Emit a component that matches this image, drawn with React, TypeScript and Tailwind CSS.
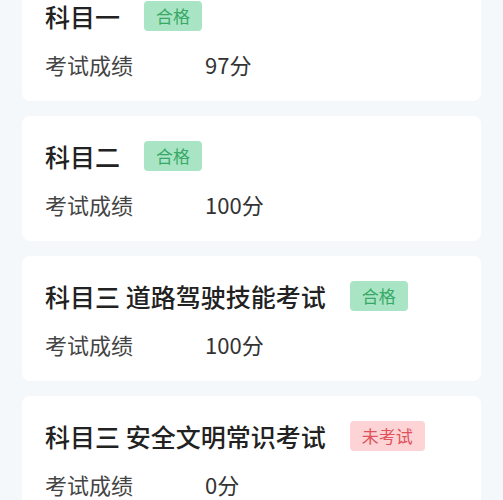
import * as React from "react"

type Status = "pass" | "absent"

interface Subject {
  title: string;
  status: Status;
  score: number;
}

const subjects: Subject[] = [
  { title: "科目一", status: "pass", score: 97 },
  { title: "科目二", status: "pass", score: 100 },
  { title: "科目三 道路驾驶技能考试", status: "pass", score: 100 },
  { title: "科目三 安全文明常识考试", status: "absent", score: 0 },
]

function StatusTag({ status }: { status: Status }) {
  if (status === "pass") {
    return (
      <span className="ml-[24px] inline-flex h-[30px] items-center rounded-[4px] bg-[#a9e5c4] px-[12px] text-[17px] text-[#37a866]">
        合格
      </span>
    )
  }
  return (
    <span className="ml-[24px] inline-flex h-[30px] items-center rounded-[4px] bg-[#fdd3d5] px-[12px] text-[17px] text-[#de525b]">
      未考试
    </span>
  )
}

function SubjectCard({ subject }: { subject: Subject }) {
  return (
    <div className="rounded-[8px] bg-white px-[23px] pt-[25px] pb-[22px]">
      <div className="flex h-[30px] items-center">
        <span className="text-[25px] leading-[30px] font-medium text-[#222]">{subject.title}</span>
        <StatusTag status={subject.status} />
      </div>
      <div className="mt-[18px] flex h-[30px] items-center text-[22px] leading-[30px]">
        <span className="w-[160px] shrink-0 text-[#444]">考试成绩</span>
        <span className="text-[#333]">{subject.score}分</span>
      </div>
    </div>
  )
}

export default function App() {
  return (
    <div
      className="h-[500px] overflow-hidden bg-[#f5f8fa]"
      style={{ fontFamily: '"Noto Sans CJK SC", "Noto Sans", sans-serif' }}
    >
      <div className="-mt-[24px] flex flex-col gap-[15px] px-[22px]">
        {subjects.map((s) => (
          <SubjectCard key={s.title} subject={s} />
        ))}
      </div>
    </div>
  )
}
